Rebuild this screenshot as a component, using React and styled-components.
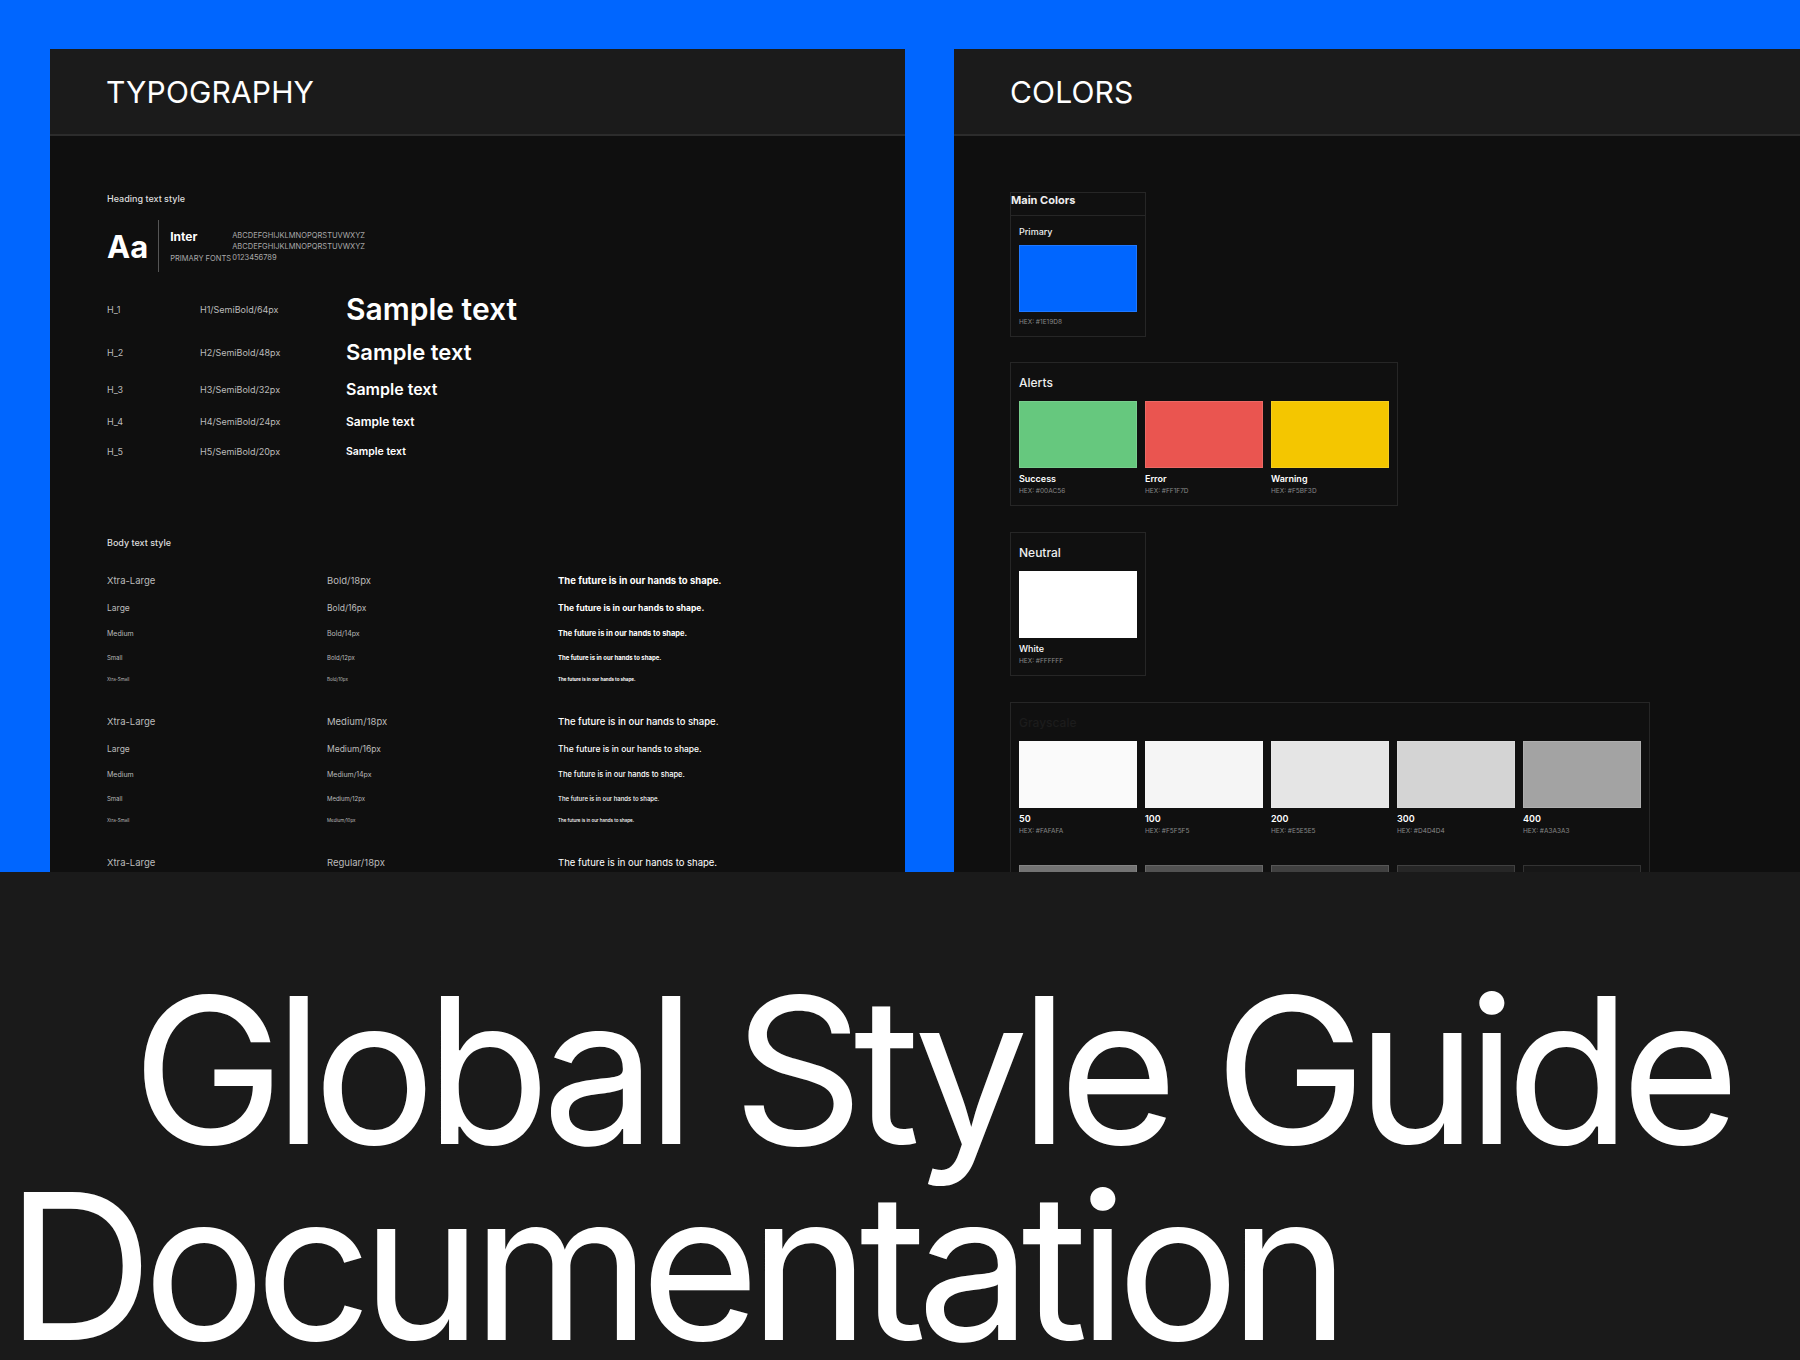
import React from "react";
import styled, { createGlobalStyle } from "styled-components";

const Global = createGlobalStyle`
  html, body { margin: 0; padding: 0; background: #1a1a1a; }
  body { font-family: Inter, "Noto Sans", sans-serif; color: #fff; }
  * { box-sizing: border-box; }
`;

const Page = styled.div`width: 1800px; height: 1360px; overflow: hidden; background: #1a1a1a;`;
const Top = styled.div`
  height: 872px; background: #0066ff; padding: 49px 0 0 50px;
  display: grid; grid-template-columns: 855px 846px; gap: 49px; overflow: hidden;
`;
const Panel = styled.section`background: #0f0f0f; height: 823px; overflow: hidden; display: flex; flex-direction: column;`;
const PanelHead = styled.header`
  height: 87px; flex: none; background: #1b1b1b; border-bottom: 2px solid #2c2c2c;
  display: flex; align-items: center; padding-left: ${p => p.$pl}px;
  font-size: 30px; font-weight: 400; letter-spacing: 0.005em;
`;
const Body = styled.div`padding: ${p => p.$pt}px 0 0 ${p => p.$pl}px; display: flex; flex-direction: column;`;
const Caption = styled.div`font-size: 9px; color: #ddd; font-weight: 500;`;
const FontRow = styled.div`display: flex; align-items: center; margin-top: 16px; height: 52px;`;
const Aa = styled.div`font-size: 31px; font-weight: 700; padding-right: 10px; border-right: 1px solid #555; height: 52px; display: flex; align-items: center;`;
const FontMeta = styled.div`display: flex; flex-direction: column; padding-left: 11px; gap: 9px; width: 73px;`;
const FontName = styled.div`font-size: 12px; font-weight: 700;`;
const Tiny = styled.div`font-size: 7.5px; color: #aaa; line-height: 11px;`;
const HRow = styled.div`display: grid; grid-template-columns: 93px 146px auto; align-items: center; height: ${p => p.$h}px;`;
const Label = styled.div`font-size: ${p => p.$s || 9}px; color: #bbb;`;
const Sample = styled.div`font-size: ${p => p.$s}px; font-weight: 600; white-space: nowrap;`;
const BRow = styled.div`display: grid; grid-template-columns: 220px 231px auto; align-items: center; height: ${p => p.$h}px;`;
const BText = styled.div`font-size: ${p => p.$s}px; font-weight: ${p => p.$w}; white-space: nowrap; color: #fff;`;

const Card = styled.div`
  border: 1px solid #262626; background: #101010; align-self: flex-start;
  padding: 0 8px 10px; margin-bottom: ${p => p.$mb || 0}px;
`;
const CardTitle = styled.div`font-size: ${p => p.$s || 12}px; font-weight: ${p => p.$w || 500}; color: ${p => p.$c || "#eee"}; padding: 12px 0 11px;`;
const Swatches = styled.div`display: flex; gap: 8px;`;
const Swatch = styled.div`display: flex; flex-direction: column; width: 118px;`;
const Chip = styled.div`height: 67px; background: ${p => p.$c}; border: 1px solid rgba(255,255,255,0.12);`;
const SName = styled.div`font-size: 9px; font-weight: 600; margin-top: 5px;`;
const SHex = styled.div`font-size: 6.5px; color: #888; margin-top: 3px;`;

const Bottom = styled.div`padding: 0; display: flex; flex-direction: column;`;
const Big = styled.div`
  font-size: 204px; font-weight: 400; letter-spacing: -0.05em; line-height: 196px;
  padding-left: ${p => p.$pl}px; white-space: nowrap; color: #fff;
`;

const heads = [
  ["H_1", "H1/SemiBold/64px", 30, 46],
  ["H_2", "H2/SemiBold/48px", 22, 40],
  ["H_3", "H3/SemiBold/32px", 16, 34],
  ["H_4", "H4/SemiBold/24px", 12, 31],
  ["H_5", "H5/SemiBold/20px", 10.5, 28],
];
const sizes = [["Xtra-Large", 18, 9.5, 9.5, 28], ["Large", 16, 8.5, 8.5, 27], ["Medium", 14, 7, 7.5, 25], ["Small", 12, 6, 6, 23], ["Xtra-Small", 10, 4.5, 4.5, 20]];
const groups = [["Bold", 700], ["Medium", 500], ["Regular", 400]];

export default function App() {
  return (
    <Page>
      <Global />
      <Top>
        <Panel>
          <PanelHead $pl={56}>TYPOGRAPHY</PanelHead>
          <Body $pt={57} $pl={57}>
            <Caption>Heading text style</Caption>
            <FontRow>
              <Aa>Aa</Aa>
              <FontMeta><FontName>Inter</FontName><Tiny>PRIMARY FONTS</Tiny></FontMeta>
              <div><Tiny>ABCDEFGHIJKLMNOPQRSTUVWXYZ</Tiny><Tiny>ABCDEFGHIJKLMNOPQRSTUVWXYZ</Tiny><Tiny>0123456789</Tiny></div>
            </FontRow>
            <div style={{ height: 14 }} />
            {heads.map(([a, b, s, h]) => (
              <HRow key={a} $h={h}><Label>{a}</Label><Label>{b}</Label><Sample $s={s}>Sample text</Sample></HRow>
            ))}
            <div style={{ height: 72 }} />
            <Caption>Body text style</Caption>
            <div style={{ height: 18 }} />
            {groups.map(([g, w]) => (
              <div key={g} style={{ marginBottom: 18 }}>
                {sizes.map(([n, px, ls, ts, h]) => (
                  <BRow key={n} $h={h}>
                    <Label $s={ls}>{n}</Label>
                    <Label $s={ls}>{g}/{px}px</Label>
                    <BText $s={ts} $w={w}>The future is in our hands to shape.</BText>
                  </BRow>
                ))}
              </div>
            ))}
          </Body>
        </Panel>
        <Panel>
          <PanelHead $pl={56}>COLORS</PanelHead>
          <Body $pt={56} $pl={56}>
            <Card $mb={25} style={{ padding: 0 }}>
              <CardTitle $w={700} $s={11} style={{ padding: "0 0 8px", borderBottom: "1px solid #262626" }}>Main Colors</CardTitle>
              <div style={{ padding: "0 8px 10px" }}>
                <CardTitle $s={9} style={{ padding: "10px 0 8px" }}>Primary</CardTitle>
                <Swatch><Chip $c="#0066ff" /><SHex style={{ marginTop: 6 }}>HEX: #1E19D8</SHex></Swatch>
              </div>
            </Card>
            <Card $mb={26}>
              <CardTitle>Alerts</CardTitle>
              <Swatches>
                <Swatch><Chip $c="#66c87e" /><SName>Success</SName><SHex>HEX: #00AC56</SHex></Swatch>
                <Swatch><Chip $c="#ea5550" /><SName>Error</SName><SHex>HEX: #FF1F7D</SHex></Swatch>
                <Swatch><Chip $c="#f4c600" /><SName>Warning</SName><SHex>HEX: #F5BF3D</SHex></Swatch>
              </Swatches>
            </Card>
            <Card $mb={26}>
              <CardTitle>Neutral</CardTitle>
              <Swatch><Chip $c="#ffffff" /><SName style={{ fontWeight: 500 }}>White</SName><SHex>HEX: #FFFFFF</SHex></Swatch>
            </Card>
            <Card>
              <CardTitle $c="#1c1c1c">Grayscale</CardTitle>
              <Swatches>
                {[["50", "#fafafa", "FAFAFA"], ["100", "#f5f5f5", "F5F5F5"], ["200", "#e5e5e5", "E5E5E5"], ["300", "#d4d4d4", "D4D4D4"], ["400", "#a3a3a3", "A3A3A3"]].map(([n, c, h]) => (
                  <Swatch key={n}><Chip $c={c} /><SName>{n}</SName><SHex>HEX: #{h}</SHex></Swatch>
                ))}
              </Swatches>
              <div style={{ height: 30 }} />
              <Swatches>
                {["#737373", "#525252", "#404040", "#262626", "#171717"].map(c => <Swatch key={c}><Chip $c={c} /></Swatch>)}
              </Swatches>
            </Card>
          </Body>
        </Panel>
      </Top>
      <Bottom>
        <div style={{ height: 100 }} />
        <Big $pl={132}>Global Style Guide</Big>
        <Big $pl={6}>Documentation</Big>
      </Bottom>
    </Page>
  );
}
